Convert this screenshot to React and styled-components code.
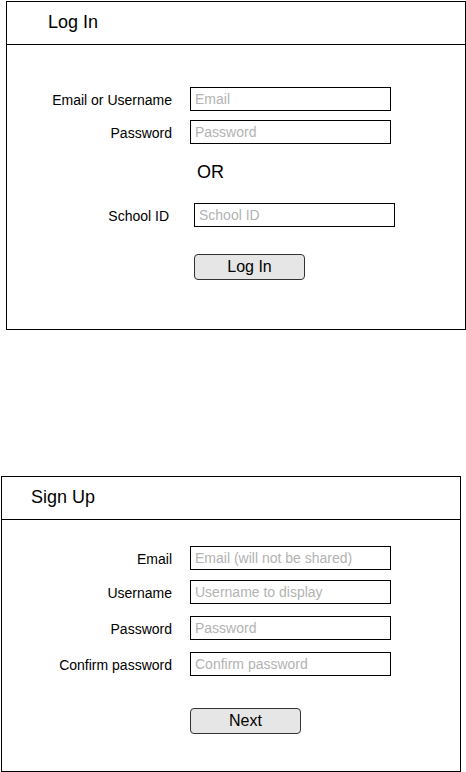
import React from "react";
import styled, { createGlobalStyle } from "styled-components";

const GlobalStyle = createGlobalStyle`
  * { box-sizing: border-box; }
  body {
    margin: 0;
    background: #fff;
    font-family: "Liberation Sans", Arial, sans-serif;
    color: #000;
  }
`;

const Page = styled.div`
  display: flex;
  flex-direction: column;
  align-items: flex-start;
  padding-top: 1px;
`;

const Panel = styled.section`
  width: 460px;
  height: ${(p) => p.$height}px;
  margin-left: ${(p) => p.$left}px;
  margin-top: ${(p) => p.$top || 0}px;
  border: 1px solid #000;
  display: flex;
  flex-direction: column;
`;

const PanelHeader = styled.header`
  height: 43px;
  border-bottom: 1px solid #000;
  display: flex;
  align-items: center;
  padding-left: ${(p) => p.$indent}px;
  font-size: 18px;
  padding-bottom: 1px;
`;

const PanelBody = styled.div`
  display: flex;
  flex-direction: column;
  align-items: flex-start;
  padding-top: ${(p) => p.$padTop}px;
`;

const FieldRow = styled.div`
  display: flex;
  align-items: center;
  margin-top: ${(p) => p.$top || 0}px;
`;

const Label = styled.label`
  width: ${(p) => p.$width}px;
  margin-right: ${(p) => p.$gap}px;
  text-align: right;
  font-size: 14px;
  line-height: 16px;
  padding-top: 2px;
  white-space: nowrap;
`;

const TextInput = styled.input`
  width: 201px;
  height: 24px;
  border: 1px solid #000;
  border-radius: 0;
  padding: 0 4px;
  margin: 0;
  font-family: "Liberation Sans", Arial, sans-serif;
  font-size: 14px;
  color: #000;
  background: #fff;
  outline: none;
  &::placeholder {
    color: #b3b3b3;
  }
`;

const OrText = styled.div`
  margin-top: 18px;
  margin-left: 190px;
  font-size: 18px;
  line-height: 21px;
`;

const ActionButton = styled.button`
  margin-top: ${(p) => p.$top}px;
  margin-left: ${(p) => p.$left}px;
  width: 111px;
  height: 26px;
  border: 1px solid #333;
  border-radius: 4px;
  background: #e6e6e6;
  font-family: "Liberation Sans", Arial, sans-serif;
  font-size: 16px;
  color: #000;
  padding: 0;
  cursor: pointer;
`;

const signUpFields = [
  { label: "Email", placeholder: "Email (will not be shared)", top: 0 },
  { label: "Username", placeholder: "Username to display", top: 10 },
  { label: "Password", placeholder: "Password", top: 12, type: "password" },
  { label: "Confirm password", placeholder: "Confirm password", top: 12, type: "password" },
];

function LogInPanel() {
  return (
    <Panel $height={329} $left={6}>
      <PanelHeader $indent={41}>Log In</PanelHeader>
      <PanelBody $padTop={42}>
        <FieldRow>
          <Label $width={165} $gap={18}>Email or Username</Label>
          <TextInput placeholder="Email" />
        </FieldRow>
        <FieldRow $top={9}>
          <Label $width={165} $gap={18}>Password</Label>
          <TextInput type="password" placeholder="Password" />
        </FieldRow>
        <OrText>OR</OrText>
        <FieldRow $top={20}>
          <Label $width={162} $gap={25}>School ID</Label>
          <TextInput placeholder="School ID" />
        </FieldRow>
        <ActionButton $top={27} $left={187}>Log In</ActionButton>
      </PanelBody>
    </Panel>
  );
}

function SignUpPanel() {
  return (
    <Panel $height={296} $left={1} $top={146}>
      <PanelHeader $indent={29}>Sign Up</PanelHeader>
      <PanelBody $padTop={26}>
        {signUpFields.map((f) => (
          <FieldRow key={f.label} $top={f.top}>
            <Label $width={170} $gap={18}>{f.label}</Label>
            <TextInput type={f.type || "text"} placeholder={f.placeholder} />
          </FieldRow>
        ))}
        <ActionButton $top={32} $left={188}>Next</ActionButton>
      </PanelBody>
    </Panel>
  );
}

export default function App() {
  return (
    <>
      <GlobalStyle />
      <Page>
        <LogInPanel />
        <SignUpPanel />
      </Page>
    </>
  );
}
